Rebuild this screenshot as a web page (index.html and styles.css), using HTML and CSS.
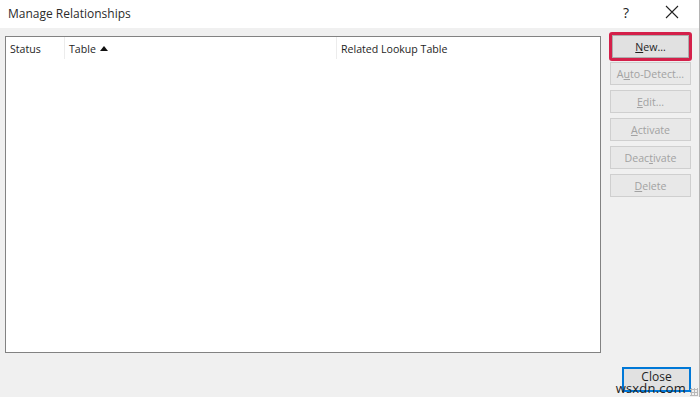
FILE: index.html
```html
<!DOCTYPE html>
<html lang="en">
<head>
  <meta charset="UTF-8" />
  <title>Manage Relationships</title>
  <link rel="stylesheet" href="styles.css">
</head>
<body>
  <div class="dialog">
    <header class="titlebar">
      <h1>Manage Relationships</h1>
      <div class="title-controls">
        <span class="help">?</span>
        <svg class="close-x" viewBox="0 0 14 14" width="14" height="14">
          <path d="M1 1 L13 13 M13 1 L1 13" stroke="#222" stroke-width="1.1" fill="none"/>
        </svg>
      </div>
    </header>

    <div class="content">
      <div class="grid-box">
        <div class="grid-head">
          <div class="col col-status">Status</div>
          <div class="col col-table">Table <span class="sort-up"></span></div>
          <div class="col col-related">Related Lookup Table</div>
        </div>
      </div>

      <div class="actions">
        <div class="highlight">
          <button class="btn"><u>N</u>ew...</button>
        </div>
        <button class="btn disabled">A<u>u</u>to-Detect...</button>
        <button class="btn disabled"><u>E</u>dit...</button>
        <button class="btn disabled"><u>A</u>ctivate</button>
        <button class="btn disabled">Deac<u>t</u>ivate</button>
        <button class="btn disabled"><u>D</u>elete</button>
      </div>
    </div>

    <footer class="footer">
      <button class="btn btn-default">Close</button>
      <span class="watermark">wsxdn.com</span>
      <span class="grip"></span>
    </footer>
  </div>
</body>
</html>
```

FILE: styles.css
```css
:root {
  --face: #f0f0f0;
  --frame: #828282;
  --text: #1e1e1e;
  --muted: #a2a2a2;
  --accent: #d4204a;
  --focus: #0078d7;
}

* {
  box-sizing: border-box;
  margin: 0;
  padding: 0;
}

html, body {
  width: 700px;
  height: 397px;
  overflow: hidden;
  font-family: 'Open Sans', 'Noto Sans', sans-serif;
  font-size: 10.6px;
  color: var(--text);
  background: var(--face);
}

.dialog {
  height: 397px;
  display: flex;
  flex-direction: column;
  border-right: 1px solid #b4b4b4;
  position: relative;
}

.titlebar {
  height: 28px;
  background: #ffffff;
  display: flex;
  align-items: center;
  justify-content: space-between;
  padding: 0 20px 0 8px;
}

h1 {
  font-size: 12px;
  font-weight: 400;
  color: #2b2b2b;
  margin-top: -2px;
}

.title-controls {
  display: flex;
  align-items: center;
  gap: 36px;
  margin-top: -4px;
}

.help {
  font-size: 14px;
  color: #222;
}

.content {
  display: flex;
  padding: 4px 0 0 5px;
}

.grid-box {
  width: 596px;
  height: 317px;
  margin-top: 4px;
  background: #ffffff;
  border: 1px solid var(--frame);
}

.grid-head {
  display: flex;
  height: 22px;
  align-items: stretch;
}

.col {
  display: flex;
  align-items: center;
  padding-left: 4px;
  padding-top: 1px;
  border-right: 1px solid #ececec;
}

.col-status {
  width: 59px;
}

.col-table {
  width: 272px;
  gap: 4px;
}

.col-related {
  flex: 1;
  border-right: none;
}

.sort-up {
  width: 0;
  height: 0;
  border-left: 4px solid transparent;
  border-right: 4px solid transparent;
  border-bottom: 5px solid #111;
  margin-top: -1px;
}

.actions {
  display: flex;
  flex-direction: column;
  gap: 5px;
  margin-left: 8px;
  width: 83px;
}

.highlight {
  border: 3px solid var(--accent);
  border-radius: 3px;
  margin-bottom: -4px;
}

.btn {
  font-family: inherit;
  font-size: 10.6px;
  height: 23px;
  width: 81px;
  background: #e1e1e1;
  border: 1px solid #adadad;
  color: var(--text);
}

.highlight .btn {
  width: 77px;
  display: block;
}

.actions > .btn {
  margin-left: 1px;
}

.btn.disabled {
  background: #e8e8e8;
  border-color: #cfcfcf;
  color: var(--muted);
}

.footer {
  flex: 1;
  display: flex;
  justify-content: flex-end;
  align-items: flex-end;
  padding: 0 8px 5px 0;
  position: relative;
}

.btn-default {
  width: 69px;
  height: 25px;
  padding-bottom: 6px;
  border: 1px solid var(--focus);
  box-shadow: inset 0 0 0 1px var(--focus);
  font-size: 12px;
  line-height: 1;
}

.watermark {
  position: absolute;
  right: 13px;
  bottom: 3px;
  font-size: 13px;
  line-height: 11px;
  color: #222;
  letter-spacing: 0.2px;
}

.grip {
  position: absolute;
  right: 1px;
  bottom: 1px;
  width: 8px;
  height: 8px;
  background-image: radial-gradient(#b8b8b8 1px, transparent 1.2px);
  background-size: 3px 3px;
}
```
